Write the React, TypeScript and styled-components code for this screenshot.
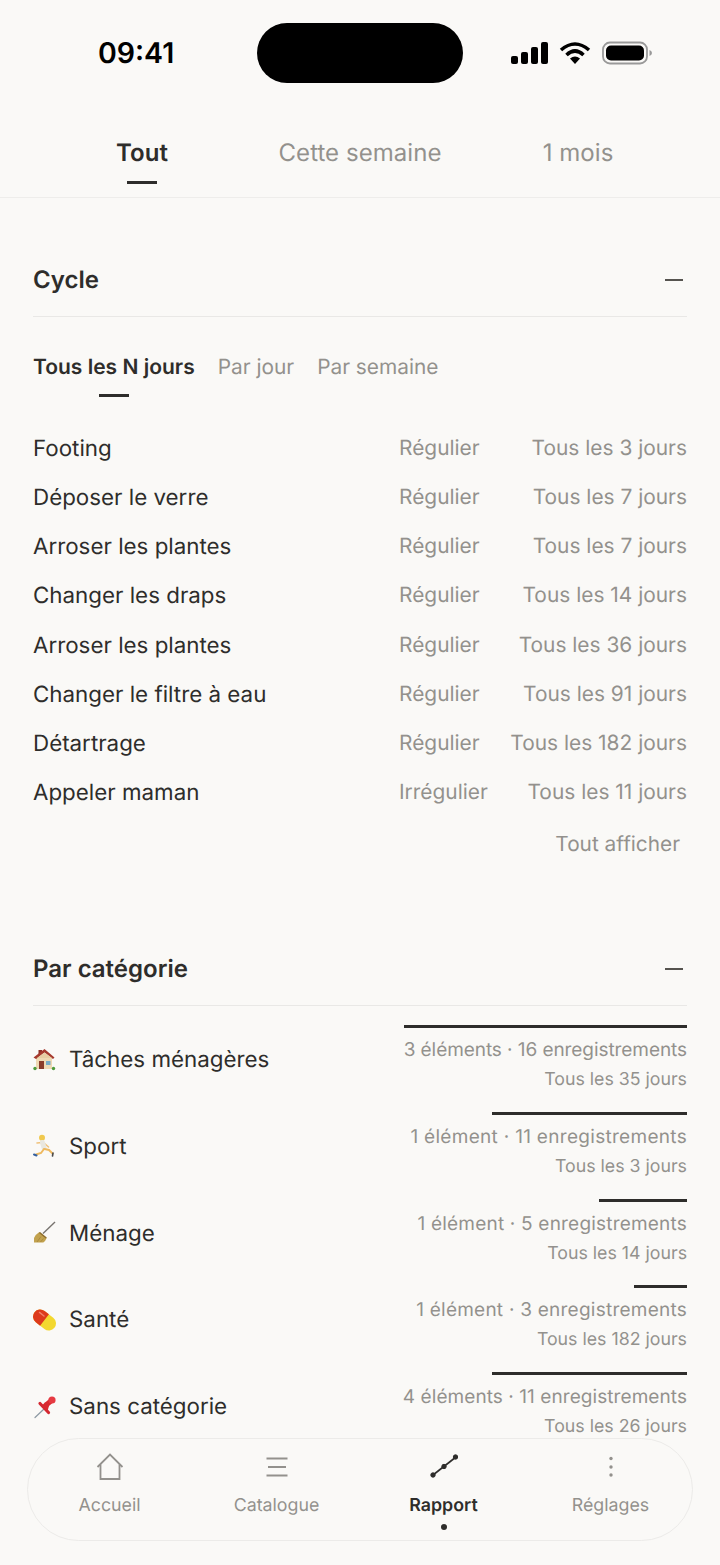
import React from "react";
import styled, { createGlobalStyle } from "styled-components";

const GlobalStyle = createGlobalStyle`
  html, body {
    margin: 0;
    padding: 0;
    background: #faf9f7;
  }
  * {
    box-sizing: border-box;
  }
`;

const Screen = styled.div`
  position: relative;
  width: 720px;
  height: 1565px;
  overflow: hidden;
  background: #faf9f7;
  color: #2e2d2b;
  font-family: Inter, "Liberation Sans", sans-serif;
  text-rendering: geometricPrecision;
`;

const StatusBar = styled.div`
  display: grid;
  grid-template-columns: 257px 206px 257px;
  height: 106px;
  padding-top: 23px;
`;

const Time = styled.div`
  height: 60px;
  padding-left: 98px;
  font-size: 28.5px;
  font-weight: 600;
  line-height: 60px;
  color: #000;
`;

const Island = styled.div`
  height: 60px;
  border-radius: 30px;
  background: #000;
`;

const StatusIcons = styled.div`
  display: flex;
  align-items: center;
  height: 60px;
  padding-left: 48px;
  gap: 11px;
`;

const Tabs = styled.div`
  display: grid;
  grid-template-columns: repeat(3, 1fr);
  height: 92px;
  padding: 0 33px;
  border-bottom: 1px solid #eeedeb;
`;

const Tab = styled.div<{ $active?: boolean }>`
  position: relative;
  padding-top: 31px;
  text-align: center;
  font-size: 24px;
  line-height: 32px;
  letter-spacing: 0.05px;
  font-weight: ${(p) => (p.$active ? 600 : 400)};
  color: ${(p) => (p.$active ? "#2e2d2b" : "#93918d")};
`;

const Underline = styled.span`
  display: block;
  width: 30px;
  height: 3px;
  margin: 12px auto 0;
  background: #2e2d2b;
`;

const Section = styled.section`
  padding: 0 33px;
`;

const CycleSection = styled(Section)`
  padding-top: 47px;
`;

const CategorySection = styled(Section)`
  padding-top: 74px;
`;

const SectionHeader = styled.div`
  display: flex;
  align-items: center;
  justify-content: space-between;
  height: 72px;
  padding-bottom: 2px;
  border-bottom: 1px solid #e9e8e6;
`;

const SectionTitle = styled.h2`
  margin: 0;
  font-size: 24px;
  font-weight: 600;
  line-height: 30px;
`;

const Collapse = styled.span`
  width: 18px;
  height: 2px;
  margin-right: 4px;
  background: #55534f;
`;

const SubTabs = styled.div`
  display: flex;
  gap: 23px;
  height: 68px;
  padding-top: 36px;
`;

const SubTab = styled.div<{ $active?: boolean }>`
  font-size: ${(p) => (p.$active ? "21px" : "20.85px")};
  line-height: 30px;
  font-weight: ${(p) => (p.$active ? 600 : 400)};
  color: ${(p) => (p.$active ? "#2e2d2b" : "#93918d")};
`;

const SubUnderline = styled.span`
  display: block;
  width: 30px;
  height: 3px;
  margin: 11px auto 0;
  background: #2e2d2b;
`;

const CycleList = styled.div`
  padding-top: 39px;
`;

const CycleRow = styled.div`
  display: grid;
  grid-template-columns: 366px 1fr auto;
  align-items: center;
  height: 49.15px;
  font-size: 22.35px;
`;

const CycleName = styled.span`
  color: #2e2d2b;
`;

const CycleMeta = styled.span`
  font-size: 20.9px;
  color: #93918d;
`;

const ShowAll = styled.div`
  padding: 13px 7px 0 0;
  text-align: right;
  font-size: 20.8px;
  line-height: 30px;
  color: #93918d;
`;

const CategoryList = styled.div`
  padding-top: 19px;
`;

const CategoryRow = styled.div`
  display: flex;
  align-items: flex-start;
  justify-content: space-between;
  height: 86.75px;
`;

const CategoryName = styled.div`
  display: flex;
  align-items: center;
  gap: 13px;
  height: 69px;
  font-size: 22.35px;
`;

const CategoryStats = styled.div`
  display: flex;
  flex-direction: column;
  align-items: flex-end;
`;

const Bar = styled.span<{ $width: number }>`
  width: ${(p) => p.$width}px;
  height: 3px;
  background: #2e2d2b;
`;

const StatLine = styled.span<{ $tracking: number }>`
  margin-top: 9px;
  font-size: 19px;
  line-height: 26px;
  letter-spacing: ${(p) => p.$tracking}px;
  color: #93918d;
`;

const StatSub = styled.span`
  margin-top: 5px;
  font-size: 17.75px;
  line-height: 24px;
  color: #93918d;
`;

const BottomNav = styled.nav`
  position: absolute;
  left: 27px;
  top: 1438px;
  display: grid;
  grid-template-columns: repeat(4, 167px);
  justify-content: center;
  width: 666px;
  height: 103px;
  border: 1px solid #ecebe9;
  border-radius: 52px;
  background: #faf9f7;
`;

const NavItem = styled.div<{ $active?: boolean }>`
  display: flex;
  flex-direction: column;
  align-items: center;
  padding-top: 14px;
  color: ${(p) => (p.$active ? "#2e2d2b" : "#93918d")};
`;

const NavLabel = styled.span<{ $active?: boolean }>`
  margin-top: 13px;
  font-size: 17.8px;
  line-height: 24px;
  font-weight: ${(p) => (p.$active ? 600 : 400)};
`;

const NavDot = styled.span`
  width: 6px;
  height: 6px;
  margin-top: 6px;
  border-radius: 50%;
  background: #2e2d2b;
`;

const cycles = [
  ["Footing", "Régulier", "Tous les 3 jours"],
  ["Déposer le verre", "Régulier", "Tous les 7 jours"],
  ["Arroser les plantes", "Régulier", "Tous les 7 jours"],
  ["Changer les draps", "Régulier", "Tous les 14 jours"],
  ["Arroser les plantes", "Régulier", "Tous les 36 jours"],
  ["Changer le filtre à eau", "Régulier", "Tous les 91 jours"],
  ["Détartrage", "Régulier", "Tous les 182 jours"],
  ["Appeler maman", "Irrégulier", "Tous les 11 jours"],
];

// emoji are drawn since no colour emoji font is installed
const HouseEmoji = () => (
  <svg width="23" height="24" viewBox="0 0 23 24">
    <rect x="3" y="9" width="16" height="12" fill="#efd9b4" />
    <path d="M5.5 2h3.5v3L5.5 8z" fill="#8f3128" />
    <path d="M11.5 1 L21.5 9.5 L20 11 L11.5 4.5 L3 11 L0.5 9.5 Z" fill="#a63a2e" />
    <path d="M11.5 4.5 L19 10 H4 Z" fill="#e8cda3" />
    <rect x="6" y="13" width="5" height="8" fill="#8a3b2a" />
    <rect x="13" y="13" width="4.5" height="4" fill="#79abc6" />
    <circle cx="2" cy="20.5" r="1.7" fill="#4f9a3c" />
    <circle cx="20.5" cy="20.5" r="1.7" fill="#4f9a3c" />
  </svg>
);

const RunnerEmoji = () => (
  <svg width="23" height="24" viewBox="0 0 23 24" fill="none" strokeLinecap="round">
    <circle cx="9" cy="3.8" r="3" fill="#f0c94f" />
    <path d="M9 8.5 L4 9" stroke="#f0c27a" strokeWidth="1.6" />
    <path d="M11 9 L15.5 13" stroke="#f0c27a" strokeWidth="1.6" />
    <path d="M9.5 8.5 L11 13.5" stroke="#e9e7df" strokeWidth="5" />
    <path d="M11 15 L8 19 L3 20.5" stroke="#eeb95f" strokeWidth="2" />
    <path d="M11.5 15 L16 16 L19.5 19.5" stroke="#eeb95f" strokeWidth="2" />
    <path d="M1 20.5 L3.5 21.5" stroke="#35609f" strokeWidth="2" />
    <path d="M20 19 L19.5 22" stroke="#4a4a4a" strokeWidth="1.6" />
  </svg>
);

const BroomEmoji = () => (
  <svg width="23" height="24" viewBox="0 0 23 24" fill="none">
    <path d="M22 1 L10 12.5" stroke="#77736e" strokeWidth="1.4" />
    <path d="M6.3 11 L13.7 17 Q12.5 20 10.3 21.5 L1 21.5 L1 17 Q3 13 6.3 11Z" fill="#c2a24e" />
    <path d="M6.5 11.5 L13.3 17" stroke="#8d6d2e" strokeWidth="1.6" />
    <path d="M4 21 L8 15.5M7.5 21 L10.5 17.5" stroke="#a5853a" strokeWidth="0.8" />
  </svg>
);

const PillEmoji = () => (
  <svg width="23" height="24" viewBox="0 0 24 24">
    <g transform="rotate(38 12 12)">
      <rect x="-1.2" y="4.5" width="26.4" height="15" rx="7.5" fill="#f3d82f" />
      <path d="M12 4.5 H6.3 A7.5 7.5 0 0 0 6.3 19.5 H12 Z" fill="#dd3a1c" />
      <path d="M3 9 H9" stroke="#f0806a" strokeWidth="1.5" strokeLinecap="round" />
    </g>
  </svg>
);

const PinEmoji = () => (
  <svg width="23" height="24" viewBox="0 0 23 24" fill="none" strokeLinecap="round">
    <path d="M2 22.5 L11 14" stroke="#8d99a3" strokeWidth="1.2" />
    <path d="M12 11 L19 5" stroke="#d92a30" strokeWidth="5" />
    <path d="M7 8.5 L15.5 17.5" stroke="#d42831" strokeWidth="3.2" />
    <path d="M10 12 L14.5 16 L16 11 L12 7Z" fill="#d92a30" />
    <circle cx="19" cy="5" r="3.6" fill="#e63a42" />
  </svg>
);

const categories = [
  { icon: <HouseEmoji />, name: "Tâches ménagères", bar: 283, stat: "3 éléments · 16 enregistrements", tracking: -0.07, every: "Tous les 35 jours" },
  { icon: <RunnerEmoji />, name: "Sport", bar: 195, stat: "1 élément · 11 enregistrements", tracking: 0.3, every: "Tous les 3 jours" },
  { icon: <BroomEmoji />, name: "Ménage", bar: 88, stat: "1 élément · 5 enregistrements", tracking: 0.2, every: "Tous les 14 jours" },
  { icon: <PillEmoji />, name: "Santé", bar: 53, stat: "1 élément · 3 enregistrements", tracking: 0.24, every: "Tous les 182 jours" },
  { icon: <PinEmoji />, name: "Sans catégorie", bar: 195, stat: "4 éléments · 11 enregistrements", tracking: 0.07, every: "Tous les 26 jours" },
];

const HomeIcon = () => (
  <svg width="28" height="28" viewBox="0 0 28 28" fill="none" stroke="currentColor" strokeWidth="1.8">
    <path d="M1.5 14 L14 1.5 L26.5 14" />
    <path d="M4.5 11.5 V26 H23.5 V11.5" />
  </svg>
);

const ListIcon = () => (
  <svg width="28" height="28" viewBox="0 0 28 28" fill="none" stroke="currentColor" strokeWidth="1.8">
    <path d="M3.5 5.5 H24.5 M5 14 H23 M3.5 22.5 H24.5" />
  </svg>
);

const ChartIcon = () => (
  <svg width="28" height="28" viewBox="0 0 28 28" fill="currentColor" stroke="currentColor">
    <path d="M3 22 L26 4" strokeWidth="1.6" />
    <circle cx="3" cy="22" r="2.2" />
    <circle cx="14" cy="13.5" r="2.2" />
    <circle cx="25.5" cy="4" r="2.2" />
  </svg>
);

const DotsIcon = () => (
  <svg width="28" height="28" viewBox="0 0 28 28" fill="currentColor">
    <circle cx="14" cy="5.5" r="1.7" />
    <circle cx="14" cy="14" r="1.7" />
    <circle cx="14" cy="22" r="1.7" />
  </svg>
);

export default function App() {
  return (
    <Screen>
      <GlobalStyle />
      <StatusBar>
        <Time>09:41</Time>
        <Island />
        <StatusIcons>
          <svg width="37" height="24" viewBox="0 0 37 24" fill="#000">
            <rect x="0" y="15" width="7" height="8" rx="2" />
            <rect x="10" y="11" width="7" height="12" rx="2" />
            <rect x="20" y="6" width="7" height="17" rx="2" />
            <rect x="30" y="1" width="7" height="22" rx="2" />
          </svg>
          <svg width="32" height="24" viewBox="0 0 32 24" fill="none" stroke="#000" strokeWidth="3.6">
            <path d="M2 9 Q16 -3 30 9" />
            <path d="M7.5 14 Q16 6 24.5 14" />
            <path d="M16 23 L11 17.5 Q16 13.5 21 17.5 Z" fill="#000" stroke="none" />
          </svg>
          <svg width="51" height="24" viewBox="0 0 51 24" fill="none">
            <rect x="1" y="1.5" width="44" height="21" rx="7" stroke="#999" strokeWidth="1.8" />
            <rect x="4" y="4.5" width="38" height="15" rx="5" fill="#000" />
            <path d="M47.5 9 Q50 10 50 12 Q50 14 47.5 15 Z" fill="#999" />
          </svg>
        </StatusIcons>
      </StatusBar>
      <Tabs>
        <Tab $active>
          Tout
          <Underline />
        </Tab>
        <Tab>Cette semaine</Tab>
        <Tab>1 mois</Tab>
      </Tabs>
      <CycleSection>
        <SectionHeader>
          <SectionTitle>Cycle</SectionTitle>
          <Collapse />
        </SectionHeader>
        <SubTabs>
          <SubTab $active>
            Tous les N jours
            <SubUnderline />
          </SubTab>
          <SubTab>Par jour</SubTab>
          <SubTab>Par semaine</SubTab>
        </SubTabs>
        <CycleList>
          {cycles.map(([name, kind, every], i) => (
            <CycleRow key={i}>
              <CycleName>{name}</CycleName>
              <CycleMeta>{kind}</CycleMeta>
              <CycleMeta>{every}</CycleMeta>
            </CycleRow>
          ))}
        </CycleList>
        <ShowAll>Tout afficher</ShowAll>
      </CycleSection>
      <CategorySection>
        <SectionHeader>
          <SectionTitle>Par catégorie</SectionTitle>
          <Collapse />
        </SectionHeader>
        <CategoryList>
          {categories.map((c) => (
            <CategoryRow key={c.name}>
              <CategoryName>
                {c.icon}
                {c.name}
              </CategoryName>
              <CategoryStats>
                <Bar $width={c.bar} />
                <StatLine $tracking={c.tracking}>{c.stat}</StatLine>
                <StatSub>{c.every}</StatSub>
              </CategoryStats>
            </CategoryRow>
          ))}
        </CategoryList>
      </CategorySection>
      <BottomNav>
        <NavItem>
          <HomeIcon />
          <NavLabel>Accueil</NavLabel>
        </NavItem>
        <NavItem>
          <ListIcon />
          <NavLabel>Catalogue</NavLabel>
        </NavItem>
        <NavItem $active>
          <ChartIcon />
          <NavLabel $active>Rapport</NavLabel>
          <NavDot />
        </NavItem>
        <NavItem>
          <DotsIcon />
          <NavLabel>Réglages</NavLabel>
        </NavItem>
      </BottomNav>
    </Screen>
  );
}
